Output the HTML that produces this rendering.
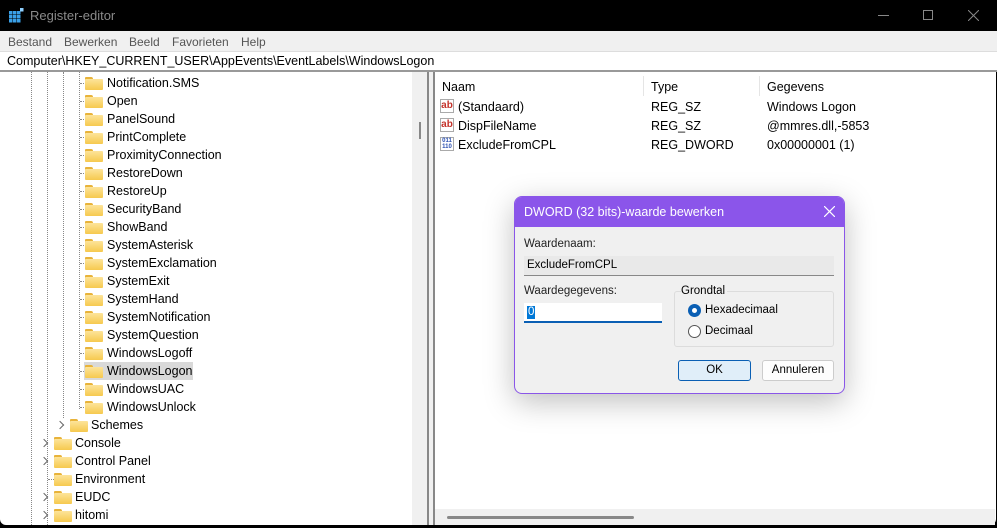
<!DOCTYPE html><html><head><style>
*{margin:0;padding:0;box-sizing:border-box}
body{width:997px;height:528px;overflow:hidden;background:#000;font-family:"Liberation Sans",sans-serif;font-size:12px;color:#000;position:relative}
.a{position:absolute;white-space:nowrap}
.f{position:absolute;width:18px;height:13px}
.f:before{content:"";position:absolute;left:0;top:0;width:8px;height:4px;background:#e8b33a;border-radius:1px 2px 0 0}
.f:after{content:"";position:absolute;left:0;top:2px;width:18px;height:11px;background:linear-gradient(#fde49a,#f6c94e);border-radius:1px}
.t{position:absolute;font-size:12.5px;line-height:18px}
.dv{position:absolute;border-left:1px dotted #888;width:0}
.dh{position:absolute;border-top:1px dotted #888;height:0;width:8px}
.ar{position:absolute;width:6px;height:6px;border-right:1.3px solid #666;border-bottom:1.3px solid #666;transform:rotate(-45deg)}
</style></head><body>
<div class="a" style="left:0;top:0;width:997px;height:31px;background:#000;border-radius:8px 8px 0 0"></div>
<svg class="a" style="left:9px;top:8px" width="15" height="15"><rect x="0" y="3" width="3.5" height="3.5" fill="#3aa0e8"/><rect x="4" y="3" width="3.5" height="3.5" fill="#3aa0e8"/><rect x="8" y="3" width="3.5" height="3.5" fill="#3aa0e8"/><rect x="0" y="7" width="3.5" height="3.5" fill="#3aa0e8"/><rect x="4" y="7" width="3.5" height="3.5" fill="#3aa0e8"/><rect x="8" y="7" width="3.5" height="3.5" fill="#3aa0e8"/><rect x="0" y="11" width="3.5" height="3.5" fill="#3aa0e8"/><rect x="4" y="11" width="3.5" height="3.5" fill="#3aa0e8"/><rect x="8" y="11" width="3.5" height="3.5" fill="#3aa0e8"/><rect x="11" y="0" width="3.5" height="3.5" fill="#8fd0ff"/></svg>
<div class="a" style="left:30px;top:8px;color:#8a8a8a;font-size:13px">Register-editor</div>
<div class="a" style="left:878px;top:15px;width:11px;border-top:1px solid #888"></div>
<div class="a" style="left:923px;top:10px;width:10px;height:10px;border:1px solid #888"></div>
<svg class="a" style="left:968px;top:10px" width="11" height="11"><path d="M0 0L11 11M11 0L0 11" stroke="#888" stroke-width="1"/></svg>
<div class="a" style="left:0;top:31px;width:997px;height:20px;background:#f0f0f0"></div>
<div class="a" style="left:8px;top:35px;color:#555">Bestand</div>
<div class="a" style="left:64px;top:35px;color:#555">Bewerken</div>
<div class="a" style="left:129px;top:35px;color:#555">Beeld</div>
<div class="a" style="left:172px;top:35px;color:#555">Favorieten</div>
<div class="a" style="left:241px;top:35px;color:#555">Help</div>
<div class="a" style="left:0;top:51px;width:997px;height:21px;background:#fff;border-top:1px solid #ddd;border-bottom:2px solid #999"></div>
<div class="a" style="left:7px;top:54px;font-size:12.5px">Computer\HKEY_CURRENT_USER\AppEvents\EventLabels\WindowsLogon</div>
<div class="a" style="left:0;top:72px;width:428px;height:453px;background:#fff;border-bottom-left-radius:6px"></div>
<div class="a" style="left:412px;top:72px;width:15px;height:453px;background:#f0f0f0"></div>
<div class="a" style="left:419px;top:122px;width:2px;height:17px;background:#888"></div>
<div class="a" style="left:427px;top:72px;width:2px;height:453px;background:#888"></div>
<div class="a" style="left:429px;top:72px;width:4px;height:453px;background:#f0f0f0"></div>
<div class="a" style="left:433px;top:72px;width:2px;height:453px;background:#888"></div>
<div class="dv" style="left:31px;top:72px;height:453px"></div>
<div class="dv" style="left:47px;top:72px;height:453px"></div>
<div class="dv" style="left:63px;top:72px;height:346px"></div>
<div class="dv" style="left:79px;top:72px;height:337px"></div>
<div class="a" style="left:84px;top:362px;width:109px;height:18px;background:#d9d9d9"></div>
<div id="tree"></div>
<script>
var n=["Notification.SMS","Open","PanelSound","PrintComplete","ProximityConnection","RestoreDown","RestoreUp","SecurityBand","ShowBand","SystemAsterisk","SystemExclamation","SystemExit","SystemHand","SystemNotification","SystemQuestion","WindowsLogoff","WindowsLogon","WindowsUAC","WindowsUnlock"];
var h="";
n.forEach(function(s,i){var y=74+i*18;h+='<div class="dh" style="left:80px;top:'+(y+9)+'px"></div><div class="f" style="left:85px;top:'+(y+3)+'px"></div><div class="t" style="left:107px;top:'+y+'px">'+s+'</div>';});
var y=74+19*18;
h+='<div class="ar" style="left:57px;top:'+(y+6)+'px"></div><div class="f" style="left:70px;top:'+(y+3)+'px"></div><div class="t" style="left:91px;top:'+y+'px">Schemes</div>';
[["Console",1],["Control Panel",1],["Environment",0],["EUDC",1],["hitomi",1]].forEach(function(o,i){var yy=y+18*(i+1);h+=(o[1]?'<div class="ar" style="left:41px;top:'+(yy+6)+'px"></div>':'<div class="dh" style="left:48px;top:'+(yy+9)+'px;width:6px"></div>')+'<div class="f" style="left:54px;top:'+(yy+3)+'px"></div><div class="t" style="left:75px;top:'+yy+'px">'+o[0]+'</div>';});
document.getElementById("tree").innerHTML=h;
</script>
<div class="a" style="left:435px;top:72px;width:561px;height:453px;background:#fff;border-bottom-right-radius:6px"></div>
<div class="a" style="left:643px;top:76px;width:1px;height:20px;background:#e5e5e5"></div>
<div class="a" style="left:759px;top:76px;width:1px;height:20px;background:#e5e5e5"></div>
<div class="t" style="left:442px;top:78px">Naam</div>
<div class="t" style="left:651px;top:78px">Type</div>
<div class="t" style="left:767px;top:78px">Gegevens</div>
<div class="a" style="left:440px;top:99px;width:14px;height:14px;border:1px solid #aaa;background:#fff;color:#c4322a;font-size:10px;font-weight:bold;line-height:11px;text-align:center">ab</div>
<div class="a" style="left:440px;top:118px;width:14px;height:14px;border:1px solid #aaa;background:#fff;color:#c4322a;font-size:10px;font-weight:bold;line-height:11px;text-align:center">ab</div>
<div class="a" style="left:440px;top:137px;width:14px;height:14px;border:1px solid #aaa;background:#fff;color:#2a4fb0;font-size:6px;font-weight:bold;line-height:6px;text-align:center">011<br>110</div>
<div class="t" style="left:458px;top:98px">(Standaard)</div><div class="t" style="left:651px;top:98px">REG_SZ</div><div class="t" style="left:767px;top:98px">Windows Logon</div>
<div class="t" style="left:458px;top:117px">DispFileName</div><div class="t" style="left:651px;top:117px">REG_SZ</div><div class="t" style="left:767px;top:117px">@mmres.dll,-5853</div>
<div class="t" style="left:458px;top:136px">ExcludeFromCPL</div><div class="t" style="left:651px;top:136px">REG_DWORD</div><div class="t" style="left:767px;top:136px">0x00000001 (1)</div>
<div class="a" style="left:435px;top:509px;width:560px;height:16px;background:#f0f0f0"></div>
<div class="a" style="left:447px;top:516px;width:187px;height:3px;background:#888;border-radius:2px"></div>
<div class="a" style="left:514px;top:196px;width:331px;height:198px;background:#f0f0f0;border:1px solid #8a56e8;border-radius:8px;box-shadow:0 8px 30px rgba(0,0,0,.25);overflow:hidden">
 <div class="a" style="left:0;top:0;width:331px;height:30px;background:#8b55ea"></div>
 <div class="a" style="left:9px;top:8px;color:#fff;font-size:12.5px">DWORD (32 bits)-waarde bewerken</div>
 <svg class="a" style="left:309px;top:9px" width="11" height="11"><path d="M0 0L11 11M11 0L0 11" stroke="#fff" stroke-width="1.2"/></svg>
 <div class="a" style="left:9px;top:41px;font-size:11.5px;color:#222">Waardenaam:</div>
 <div class="a" style="left:9px;top:59px;width:310px;height:20px;background:#e9e9e9;border-bottom:1px solid #888;font-size:11.5px;padding:3px 3px">ExcludeFromCPL</div>
 <div class="a" style="left:9px;top:88px;font-size:11.5px;color:#222">Waardegegevens:</div>
 <div class="a" style="left:9px;top:106px;width:138px;height:20px;background:#fff;border-bottom:2px solid #0a5fb4"></div>
 <div class="a" style="left:12px;top:109px;background:#0078d7;color:#fff;font-size:11.5px;line-height:13px;padding:0 1px">0</div>
 <div class="a" style="left:159px;top:94px;width:160px;height:56px;border:1px solid #dcdcdc;border-radius:3px"></div>
 <div class="a" style="left:166px;top:88px;background:#f0f0f0;font-size:11.5px;padding-right:2px">Grondtal</div>
 <div class="a" style="left:173px;top:107px;width:13px;height:13px;border-radius:50%;background:#0a5fb4"></div>
 <div class="a" style="left:177px;top:111px;width:5px;height:5px;border-radius:50%;background:#fff"></div>
 <div class="a" style="left:190px;top:107px;font-size:11.5px">Hexadecimaal</div>
 <div class="a" style="left:173px;top:128px;width:13px;height:13px;border-radius:50%;border:1px solid #555;background:#fff"></div>
 <div class="a" style="left:190px;top:128px;font-size:11.5px">Decimaal</div>
 <div class="a" style="left:163px;top:163px;width:73px;height:21px;background:#e0eef9;border:1px solid #0a5fb4;border-radius:3px;text-align:center;line-height:19px;font-size:11.5px">OK</div>
 <div class="a" style="left:247px;top:163px;width:72px;height:21px;background:#fdfdfd;border:1px solid #ccc;border-radius:3px;text-align:center;line-height:19px;font-size:11.5px">Annuleren</div>
</div>
</body></html>
